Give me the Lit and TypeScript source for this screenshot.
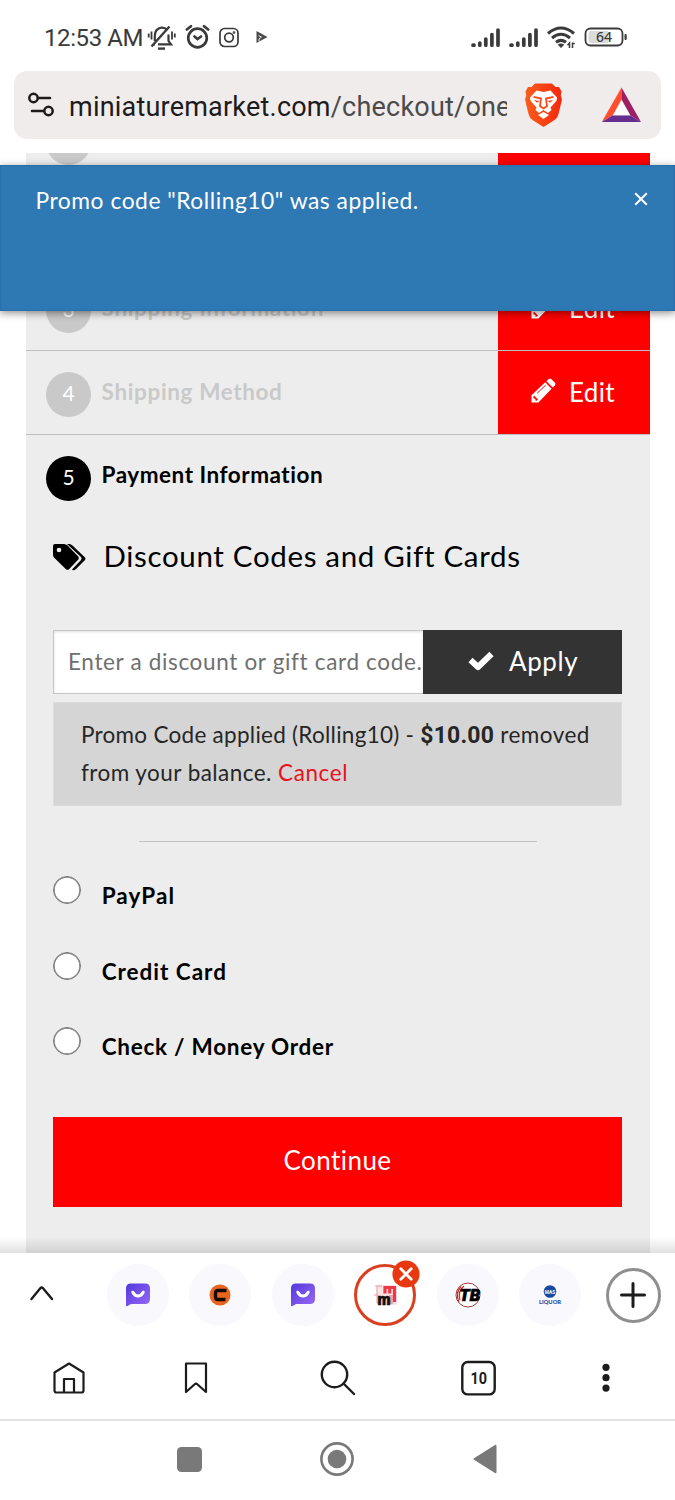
import { LitElement, html, css } from "lit";
import { customElement } from "lit/decorators.js";

const pencil = html`<svg class="pencil" width="25" height="26" viewBox="0 0 25 26">
  <path fill="#fff" d="M0.5 24.6V17.2L14.2 4.2L20.6 10.8L7.4 24.6Z"/>
  <path fill="#fff" d="M15.4 3.2L17.8 0.9Q19 -0.1 20.2 0.9L24 4.8Q25 6 24 7.2L21.8 9.6Z"/>
  <path stroke="#f00" stroke-width="1" fill="none" d="M6.2 15.2L14.6 7.2"/>
  <path fill="#f00" d="M3.2 17.8L7 21.4L5.6 22.8L4.4 22.6V20.8L2.6 20.4L2.4 18.6Z"/>
</svg>`;

const chatTab = (id: string) => html`<svg width="26" height="24" viewBox="0 0 26 24">
  <defs><linearGradient id=${id} x1="0" y1="0" x2="1" y2="1"><stop offset="0" stop-color="#5238dc"/><stop offset="1" stop-color="#9a6af6"/></linearGradient></defs>
  <path fill="url(#${id})" d="M6 0.500H20Q25 0.500 25 5.500V16Q25 21 20 21H6L2.600 23Q1 23.700 1 22V5.500Q1 0.500 6 0.500Z"/>
  <path d="M7.800 9.200Q9.800 13 13 13T18.200 9.200" fill="none" stroke="#fff" stroke-width="3" stroke-linecap="round"/>
</svg>`;

const bars = html`<svg width="30" height="20" viewBox="0 0 30 20">
  <g stroke="#3b3b3b" stroke-width="3.700" stroke-linecap="round">
    <path d="M2 17.200H3M8.800 17.200V15M14.800 17.200V11M20.900 17.200V6.500M27 17.200V2"/>
  </g></svg>`;

@customElement("app-root")
export class AppRoot extends LitElement {
  static styles = css`
    :host { display: flex; flex-direction: column; width: 675px; height: 1500px; background: #fff; overflow: hidden; font-family: Lato, "Open Sans", sans-serif; font-variant-ligatures: none; color: #000; }
    * { box-sizing: border-box; }
    svg { display: block; overflow: visible; flex: none; }
    .status { height: 71px; flex: none; display: flex; align-items: center; padding: 4px 47px 0 44px; font: 24px/30px Roboto, sans-serif; color: #3b3b3b; }
    .clock { width: 103px; white-space: nowrap; letter-spacing: -0.400px; }
    .tray { display: flex; align-items: center; gap: 9px; }
    .signals { margin-left: auto; display: flex; align-items: center; gap: 8px; }
    .address { height: 68px; flex: none; margin: 0 14px 14px; border-radius: 13px; background: #f0eceb; display: flex; align-items: center; padding: 0 19px 0 14px; }
    .url { width: 438px; margin-left: 14px; padding-top: 3px; overflow: hidden; white-space: nowrap; font: 27px/36px Roboto, sans-serif; color: #4c4a4a; letter-spacing: 0.210px; }
    .url b { font-weight: 400; color: #1d1b1b; }
    .lion { margin-left: 17px; }
    .bat { margin-left: 38px; }
    .view { position: relative; height: 1100px; flex: none; overflow: hidden; }
    .panel { margin: -54px 25px 0 26px; background: #ededed; height: 1160px; }
    .step { height: 84px; border-bottom: 1px solid #bfbfbf; display: flex; justify-content: space-between; }
    .head { display: flex; padding: 21px 0 0 20px; gap: 10.600px; }
    .num { width: 45px; height: 45px; border-radius: 50%; background: #c9c9c9; color: #fff; font-size: 21px; line-height: 42px; text-align: center; }
    .label { font-weight: 700; font-size: 22.500px; line-height: 39px; color: #c9c9c9; white-space: nowrap; letter-spacing: 0.630px; }
    .current .num { background: #000; }
    .current .label { color: #000; letter-spacing: 0.520px; line-height: 38px; }
    .edit { width: 152px; background: #f00; color: #fff; display: flex; align-items: center; gap: 13px; padding-left: 33px; font-size: 26px; line-height: 82px; letter-spacing: 0.300px; }
    .edit span { margin-top: -1px; }
    .pencil { margin-top: -4px; }
    .body { padding: 0 28px 0 27px; }
    h2 { margin: 36px 0 0; display: flex; align-items: center; gap: 17.500px; font-weight: 400; font-size: 29.500px; line-height: 38px; height: 40px; white-space: nowrap; letter-spacing: 0.660px; }
    h2 span { margin-top: -2px; }
    .coupon { margin-top: 53px; height: 64px; display: flex; }
    .field { width: 370px; border: 1px solid #c6c6c6; border-right: 0; background: #fff; box-shadow: inset 0 1px 3px rgba(0,0,0,.12); padding-left: 14px; font-size: 22.500px; line-height: 61px; letter-spacing: 0.660px; color: #6f6f6f; white-space: nowrap; overflow: hidden; }
    .apply { flex: 1; background: #333; color: #fff; display: flex; align-items: center; padding-left: 45px; gap: 15px; font-size: 26px; line-height: 60px; letter-spacing: 0.600px; }
    .apply span { margin-top: -2px; }
    .apply svg { margin-top: -3px; }
    .applied { margin-top: 8px; height: 104px; background: #d5d5d5; border: 1px solid #dcdcdc; padding: 13px 0 0 27px; font-size: 22.500px; line-height: 37px; color: #262626; white-space: nowrap; letter-spacing: 0.270px; }
    .amount { font-family: Roboto, sans-serif; font-weight: 700; font-size: 23px; letter-spacing: 0.200px; }
    .rest { letter-spacing: 0.450px; }
    .cancel { color: #e8121a; letter-spacing: 0.600px; }
    .rule { height: 1px; margin: 35px 85px 0 86px; background: #c2c2c2; }
    .methods { display: flex; flex-direction: column; margin-top: 34px; }
    .method { display: flex; height: 75.700px; gap: 20.700px; font-weight: 700; font-size: 22.500px; line-height: 40px; white-space: nowrap; letter-spacing: 0.740px; }
    .method:first-child { letter-spacing: 1.100px; }
    .method:nth-child(2) { letter-spacing: 0.980px; }
    .radio { width: 28px; height: 28px; border-radius: 50%; border: 1px solid #777; background: #fff; box-shadow: inset 0 0 0 .7px #777; }
    .continue { height: 90px; margin-top: 14px; background: #f00; color: #fff; text-align: center; font-size: 26px; line-height: 87px; letter-spacing: 0.450px; }
    .toast { position: absolute; left: 0; right: 0; top: 12px; height: 146px; background: #2e78b4; box-shadow: 0 2px 8px rgba(0,0,0,.45), inset 0 0 2px #1c609b; color: #fff; padding: 16px 27px 0 35.500px; display: flex; justify-content: space-between; font-size: 22.800px; line-height: 38px; letter-spacing: 0.530px; white-space: nowrap; }
    .toast svg { margin-top: 11px; }
    .shade { position: absolute; left: 0; right: 0; bottom: 0; height: 16px; background: linear-gradient(rgba(0,0,0,0), rgba(0,0,0,.12)); }
    .tabs { height: 84px; flex: none; display: flex; align-items: center; padding: 0 14px 0 30px; }
    .up { margin: -3px 53.500px 0 0; }
    .tab { width: 62px; height: 62px; border-radius: 50%; background: #f8f8fd; margin-right: 20.500px; display: flex; align-items: center; justify-content: center; flex: none; }
    .on { position: relative; background: #fff; border: 3px solid #d8401f; }
    .close { position: absolute; left: 35px; top: -7px; }
    .add { width: 55px; height: 55px; border: 3px solid #8f8f8f; border-radius: 50%; display: flex; align-items: center; justify-content: center; margin-left: 4px; flex: none; }
    .tools { height: 84px; flex: none; display: grid; grid-template-columns: 137px 118px 166px 115px 140px; justify-items: center; align-items: center; border-bottom: 2px solid #e2e2e2; }
    .system { flex: 1; display: grid; grid-template-columns: 263px 148px 148px; justify-items: center; align-items: center; padding-bottom: 3px; }
    .system svg:first-child { margin-left: 115px; }
  `;

  render() {
    return html`
      <div class="status">
        <span class="clock">12:53 AM</span>
        <div class="tray">
          <svg width="29" height="26" viewBox="0 0 29 26" fill="none" stroke="#3b3b3b" stroke-width="2.200">
            <path d="M7.800 16V11Q8 3.500 14.500 2.700Q18 2.500 20.500 5M21.500 9.500V16L24 19.300H11M6 19.300H8"/>
            <path stroke-width="2.400" d="M4.500 21.500L22.500 1.500"/><path d="M11 23.600H18" stroke-width="2.400"/>
            <path stroke-width="1.800" d="M1.700 8.500V12.500M4.500 6.500V14.500M25 6.500V14.500M27.800 8.500V12.500"/>
          </svg>
          <svg width="25" height="26" viewBox="0 0 25 26" fill="none" stroke="#3b3b3b" stroke-width="2.700">
            <circle cx="12.500" cy="13" r="9.300"/><path stroke-linecap="round" d="M1.800 4.500L6 1.200M23.200 4.500L19 1.200M9.500 11.500L12.500 14.100L16 11.500"/>
          </svg>
          <svg width="20" height="20" viewBox="0 0 20 20" fill="none" stroke="#3b3b3b" stroke-width="1.700">
            <rect x="1" y=".5" width="18" height="18" rx="4.500"/><circle cx="10" cy="9.500" r="4.300"/><circle cx="15" cy="4.500" r=".5"/>
          </svg>
          <svg width="30" height="14" viewBox="0 0 30 14"><path fill="#4a4a4a" d="M8.500 0L19.500 6L8.500 12Z"/><path fill="none" stroke="#fff" stroke-width=".9" d="M10.500 4.500L13.500 6L11 8V10.500"/></svg>
        </div>
        <div class="signals">
          ${bars}${bars}
          <svg width="29" height="24" viewBox="0 0 29 24" fill="none" stroke="#3b3b3b" stroke-width="3">
            <path d="M1 7.500Q14 -3.500 27 7.500M5 12Q14 4.500 23 12M9 16.300Q14 12.500 19 16.300"/>
            <path fill="#3b3b3b" stroke="none" d="M14 22L10.800 18.700Q14 16.500 17.200 18.700Z"/>
            <path stroke-width="1.500" d="M22.500 22V17L20.500 19.300M25.500 16.500V22M25.500 17.500H27.800"/>
          </svg>
          <svg width="44" height="19" viewBox="0 0 44 19">
            <rect x="1.500" y="0.500" width="37" height="17" rx="5" fill="#fff" stroke="#3b3b3b" stroke-width="1.800"/>
            <path fill="#dcdcdc" d="M7 3H24V15H7Q4.500 15 4.500 12.500V5.500Q4.500 3 7 3Z"/>
            <rect x="40.500" y="6" width="2.200" height="6" rx="1" fill="#3b3b3b"/>
            <text x="20" y="14.200" text-anchor="middle" font-family="Noto Sans" font-weight="500" font-size="14" fill="#3b3b3b">64</text>
          </svg>
        </div>
      </div>

      <div class="address">
        <svg width="27" height="26" viewBox="0 0 27 26" fill="none" stroke="#1d1b1b" stroke-width="2.500" stroke-linecap="round">
          <circle cx="5.500" cy="6" r="4.200"/><path d="M10.500 6H22M4 19H15.500"/><circle cx="20.500" cy="19" r="4.200"/>
        </svg>
        <div class="url"><b>miniaturemarket.com</b>/checkout/one</div>
        <svg class="lion" width="39" height="45" viewBox="0 0 39 45">
          <defs><linearGradient id="mane" x1="0" x2="1"><stop offset="0" stop-color="#fb5e1c"/><stop offset="1" stop-color="#f4280c"/></linearGradient></defs>
          <path fill="url(#mane)" d="M11 0.500H28L31.500 4H35L37.500 8.500L36.800 12.500L38 16.500L34.500 31Q33.500 35 30.500 37L19.500 44L8.500 37Q5.500 35 4.500 31L1 16.500L2.200 12.500L1.500 8.500L4 4H7.500Z"/>
          <path fill="#fff" d="M12.500 7.500L19.500 9L26.500 7.500L33 14.500Q33.500 17 31 19.500L26.500 24.500L27.500 27L24 30L19.500 27L15 30L11.500 27L12.500 24.500L8 19.500Q5.500 17 6 14.500Z"/>
          <path fill="#fff" d="M19.500 29L25 32L19.500 36L14 32Z"/>
          <path fill="none" stroke="#f8481a" stroke-width="1.800" d="M9.500 13.800L17 15.500L16 23L19.500 25.500L23 23L22 15.500L29.500 13.800"/>
          <path fill="#f8481a" d="M10 17L15.500 18L13 19.700ZM29 17L23.500 18L26 19.700Z"/>
        </svg>
        <svg class="bat" width="39" height="36" viewBox="0 0 39 36">
          <path fill="#ff4f2e" d="M20.500 .5V12.500L11.500 28.500L.8 35Z"/><path fill="#9e1f63" d="M20.500 .5L40 35L29.500 28.500L20.500 12.500Z"/><path fill="#662d91" d="M.8 35L11.500 28.500H29.500L40 35Z"/><path fill="#fff" d="M20.500 13.500L28 28H13Z"/>
        </svg>
      </div>

      <div class="view">
        <div class="panel">
          <div class="step"><div class="head"><div class="num"></div></div><div class="edit"></div></div>
          <div class="step"></div>
          <div class="step"><div class="head"><div class="num">3</div><div class="label">Shipping Information</div></div><div class="edit">${pencil}<span>Edit</span></div></div>
          <div class="step"><div class="head"><div class="num">4</div><div class="label">Shipping Method</div></div><div class="edit">${pencil}<span>Edit</span></div></div>
          <div class="head current"><div class="num">5</div><div class="label">Payment Information</div></div>
          <div class="body">
            <h2>
              <svg width="33" height="27" viewBox="0 0 33 27">
                <path d="M0 2Q0 0 2 0H11Q13 0 14.500 1.500L25.300 12.500Q26.500 14 25.300 15.500L16 25.200Q14.500 26.500 13 25.200L1.500 14Q0 12.500 0 11Z"/><circle cx="6" cy="6" r="2.300" fill="#ededed"/>
                <path d="M14 0H16.500Q18 0 19.500 1.500L32 13.500Q33 14.500 32 16L22.800 25.200Q21.500 26.500 19.500 26L19 25.500L28 16Q29.200 14.500 28 13Z"/>
              </svg>
              <span>Discount Codes and Gift Cards</span>
            </h2>
            <div class="coupon">
              <div class="field">Enter a discount or gift card code.</div>
              <div class="apply"><svg width="26" height="20" viewBox="0 0 26 20"><path fill="none" stroke="#fff" stroke-width="6" stroke-linejoin="round" d="M2.500 9L10 16L23.500 3"/></svg><span>Apply</span></div>
            </div>
            <div class="applied"><div>Promo Code applied (Rolling10) - <span class="amount">$10.00</span><span class="rest"> removed</span></div><div class="rest">from your balance. <span class="cancel">Cancel</span></div></div>
            <div class="rule"></div>
            <div class="methods">
              <div class="method"><div class="radio"></div><span>PayPal</span></div>
              <div class="method"><div class="radio"></div><span>Credit Card</span></div>
              <div class="method"><div class="radio"></div><span>Check / Money Order</span></div>
            </div>
            <div class="continue">Continue</div>
          </div>
        </div>
        <div class="toast"><span>Promo code "Rolling10" was applied.</span>
          <svg width="14" height="14" viewBox="0 0 14 14"><path stroke="#fff" stroke-width="2" d="M1.200 1.200L12.800 12.800M12.800 1.200L1.200 12.800"/></svg></div>
        <div class="shade"></div>
      </div>

      <div class="tabs">
        <svg class="up" width="23" height="15" viewBox="0 0 23 15"><path fill="none" stroke="#1c1c1c" stroke-width="2.400" stroke-linecap="round" d="M1.500 13L10.300 2.300Q11.700 .8 13 2.300L22 13"/></svg>
        <div class="tab">${chatTab("g1")}</div>
        <div class="tab"><svg width="22" height="22" viewBox="0 0 22 22"><circle cx="11" cy="11" r="10.500" fill="#e8651f"/><path fill="none" stroke="#160a06" stroke-width="3.400" d="M17.500 6.500H9Q6.500 6.500 6.500 9V13Q6.500 15.500 9 15.500H16.500"/></svg></div>
        <div class="tab">${chatTab("g2")}</div>
        <div class="tab on">
          <svg width="24" height="22" viewBox="0 0 24 22"><rect x="4" y="1" width="20" height="20" rx="2" fill="#fbe3e5"/><path fill="none" stroke="#e99aa0" stroke-width="1" d="M2 2H9M4 2V19H8M1 11H5"/>
            <path fill="none" stroke="#ea3a48" stroke-width="3.200" d="M12 9.500V3.500H21.500V18M16.700 3V9.500"/><rect x="16" y="11" width="4" height="9" fill="#f3a0a7"/>
            <text x="4.500" y="20.500" font-family="Roboto" font-weight="900" font-size="16" textLength="13" lengthAdjust="spacingAndGlyphs" fill="#111" stroke="#111" stroke-width=".6">m</text></svg>
          <svg class="close" width="28" height="28" viewBox="0 0 28 28"><circle cx="14" cy="14" r="13.600" fill="#e8380f"/><path stroke="#fff" stroke-width="2.800" stroke-linecap="round" d="M8.800 8.800L19.200 19.200M19.200 8.800L8.800 19.200"/></svg>
        </div>
        <div class="tab"><svg width="26" height="26" viewBox="0 0 26 26"><circle cx="13" cy="13" r="12" fill="#fff" stroke="#a33c3c"/><path d="M9 4Q2.500 9 5 18M6 4.500Q0 11 4 20" fill="none" stroke="#c62828" stroke-width="1.200"/><text x="4.500" y="18.800" font-family="Roboto" font-weight="900" font-style="italic" font-size="16" textLength="20.500" lengthAdjust="spacingAndGlyphs" fill="#000" stroke="#000" stroke-width=".7">TB</text></svg></div>
        <div class="tab"><svg width="24" height="22" viewBox="0 0 24 22"><circle cx="12" cy="7.500" r="6.300" fill="#17499f"/><text x="12" y="9.500" text-anchor="middle" font-family="Roboto" font-weight="700" font-size="4.800" fill="#fff">MAS</text><text x="1" y="20.300" font-family="Lato" font-weight="900" font-size="6.300" textLength="22" lengthAdjust="spacingAndGlyphs" fill="#17499f">LIQUOR</text></svg></div>
        <div class="add"><svg width="26" height="26" viewBox="0 0 26 26"><path stroke="#1c1c1c" stroke-width="3" stroke-linecap="round" d="M13 1.500V24.500M1.500 13H24.500"/></svg></div>
      </div>

      <div class="tools">
        <svg width="32" height="32" viewBox="0 0 32 32" fill="none" stroke="#1c1c1c" stroke-width="2.200" stroke-linejoin="round"><path d="M1.500 10.500L16 1.500L30.500 10.500V28.500Q30.500 30.500 28.500 30.500H3.500Q1.500 30.500 1.500 28.500Z"/><path d="M11 30V17H21V30"/></svg>
        <svg width="24" height="32" viewBox="0 0 24 32" fill="none" stroke="#1c1c1c" stroke-width="2.200" stroke-linejoin="round"><path d="M2 1.500H22V30L13.300 22.300Q12 21 10.700 22.300L2 30Z"/></svg>
        <svg width="36" height="36" viewBox="0 0 36 36" fill="none" stroke="#1c1c1c" stroke-width="2.400" stroke-linecap="round"><circle cx="14.500" cy="14.500" r="12.700"/><path d="M23.500 23.500L34 34"/></svg>
        <svg width="35" height="35" viewBox="0 0 35 35"><rect x="1.300" y="1" width="32.400" height="32.400" rx="5.500" fill="none" stroke="#1c1c1c" stroke-width="2.400"/><text x="9.500" y="22.500" font-family="Roboto" font-weight="700" font-size="17" textLength="16.500" lengthAdjust="spacingAndGlyphs" fill="#1c1c1c">10</text></svg>
        <svg width="8" height="28" viewBox="0 0 8 28" fill="#1c1c1c"><circle cx="4" cy="3.300" r="3.600"/><circle cx="4" cy="13.700" r="3.600"/><circle cx="4" cy="24.100" r="3.600"/></svg>
      </div>

      <div class="system">
        <svg width="25" height="25" viewBox="0 0 25 25"><rect width="25" height="25" rx="4.500" fill="#797979"/></svg>
        <svg width="34" height="34" viewBox="0 0 34 34"><circle cx="17" cy="17" r="15.600" fill="none" stroke="#797979" stroke-width="2.600"/><circle cx="17" cy="17" r="9.300" fill="#797979"/></svg>
        <svg width="24" height="30" viewBox="0 0 24 30"><path fill="#797979" stroke="#797979" stroke-width="2" stroke-linejoin="round" d="M1.500 15L22.500 1.800V28.200Z"/></svg>
      </div>
    `;
  }
}
